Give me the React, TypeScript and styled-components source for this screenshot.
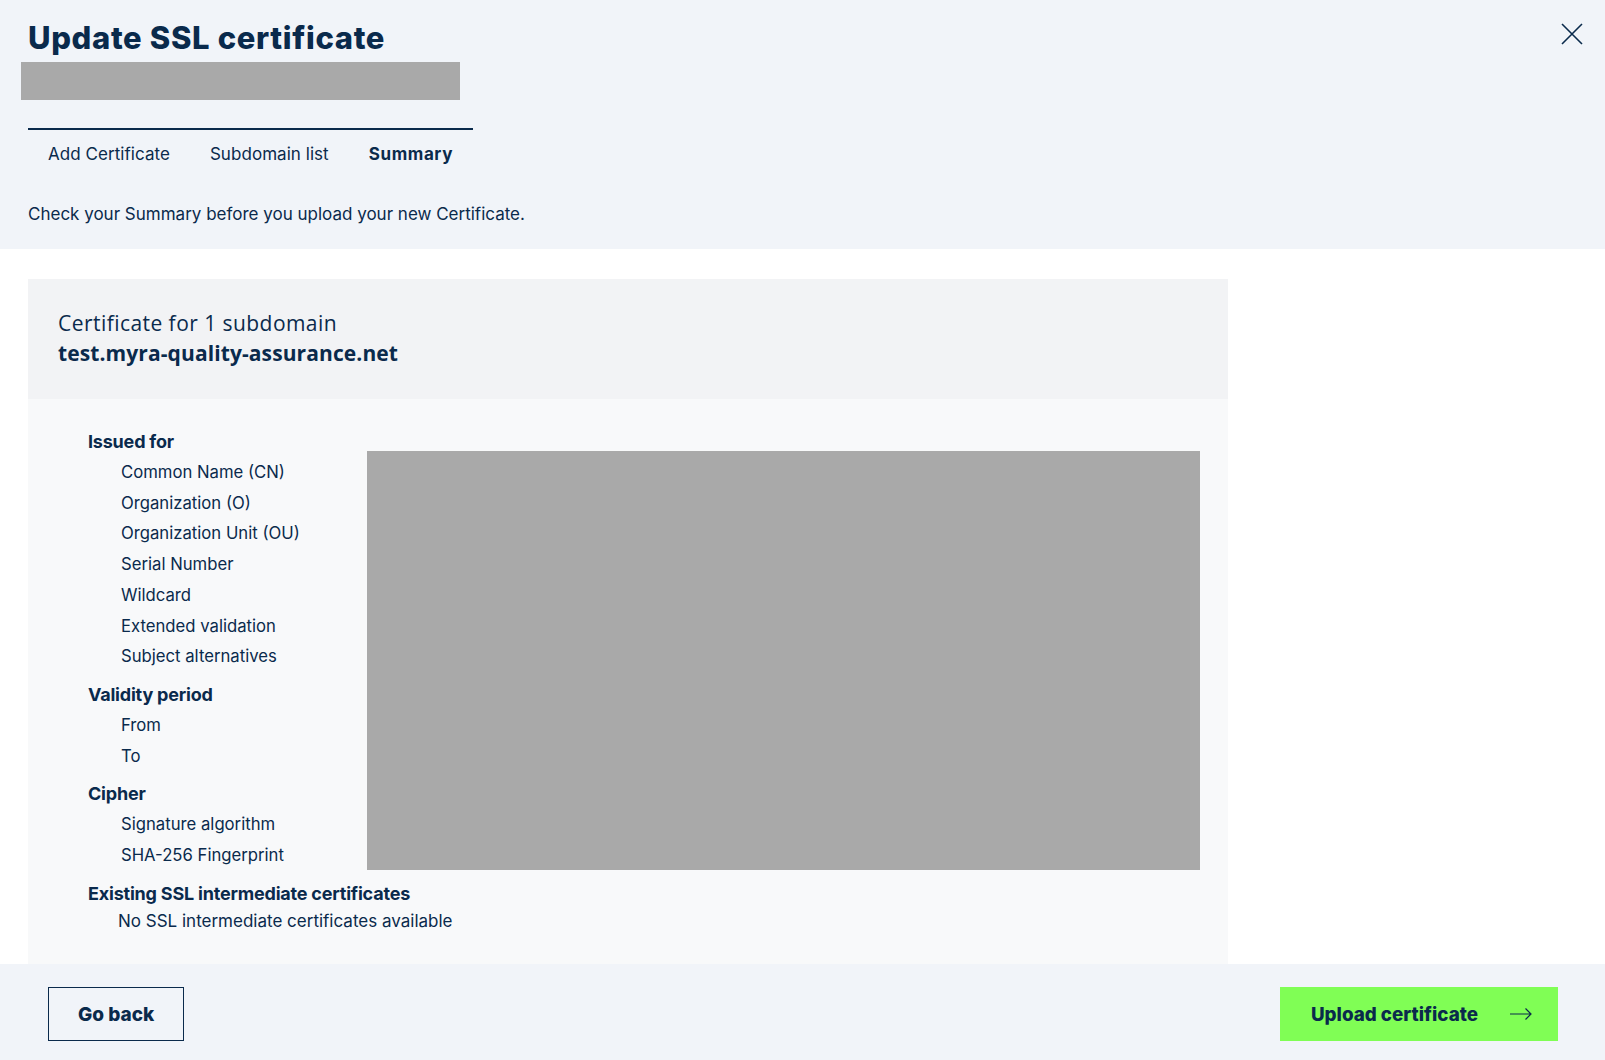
import React from "react";
import styled, { createGlobalStyle } from "styled-components";

const navy = "#0a2a4c";

const GlobalStyle = createGlobalStyle`
  html, body {
    margin: 0;
    padding: 0;
    background: #ffffff;
    color: ${navy};
    font-family: "Inter", "Open Sans", sans-serif;
  }
  * {
    box-sizing: border-box;
  }
`;

//layout
const Page = styled.div`
  width: 1605px;
  height: 1060px;
  display: flex;
  flex-direction: column;
  overflow: hidden;
`;

const Header = styled.header`
  position: relative;
  flex-shrink: 0;
  height: 249px;
  background-color: #f1f4f9;
  padding: 18px 28px 0 28px;
`;

const Title = styled.h1`
  margin: 0;
  font-family: "Inter", sans-serif;
  font-size: 31px;
  font-weight: 800;
  letter-spacing: 0.65px;
  line-height: 40px;
  color: ${navy};
`;

const Redacted = styled.div<{ $w?: number; $h?: number }>`
  background-color: #a9a9a9;
  width: ${(p) => (p.$w ? `${p.$w}px` : "auto")};
  height: ${(p) => (p.$h ? `${p.$h}px` : "auto")};
`;

const HeaderRedacted = styled(Redacted)`
  margin: 4px 0 0 -7px;
`;

const CloseButton = styled.button`
  position: absolute;
  top: 22px;
  right: 21px;
  width: 24px;
  height: 24px;
  padding: 0;
  border: none;
  background: none;
  cursor: pointer;
`;

const Tabs = styled.nav`
  display: inline-flex;
  margin-top: 28px;
  border-top: 2px solid ${navy};
`;

const Tab = styled.span<{ $active?: boolean }>`
  padding: 12px 20px 0 20px;
  font-size: 17px;
  line-height: 24px;
  font-weight: ${(p) => (p.$active ? 700 : 400)};
  letter-spacing: ${(p) => (p.$active ? "0.6px" : "0.05px")};
`;

const Intro = styled.p`
  margin: 37px 0 0 0;
  font-size: 17px;
  line-height: 22px;
`;

const Main = styled.main`
  flex: 1;
  min-height: 0;
  padding: 30px 377px 0 28px;
  display: flex;
  flex-direction: column;
`;

const Card = styled.section`
  flex: 1;
  display: flex;
  flex-direction: column;
`;

const CardHead = styled.div`
  flex-shrink: 0;
  height: 120px;
  background-color: #f2f3f5;
  padding: 29px 30px 0 30px;
  font-family: "Open Sans", sans-serif;
`;

const CardSub = styled.div`
  font-size: 21px;
  line-height: 30px;
  font-weight: 500;
  letter-spacing: 0.45px;
`;

const CardDomain = styled.div`
  font-size: 21px;
  line-height: 30px;
  font-weight: 700;
  letter-spacing: 0.1px;
`;

const CardBody = styled.div`
  flex: 1;
  background-color: #f8f9fa;
  padding: 28px 28px 0 60px;
  display: grid;
  grid-template-columns: 279px 1fr;
  align-items: start;
`;

const Labels = styled.div`
  display: flex;
  flex-direction: column;
`;

const Section = styled.div`
  display: flex;
  flex-direction: column;
  margin-bottom: 8px;
`;

const SectionTitle = styled.div`
  font-size: 18px;
  line-height: 30px;
  font-weight: 700;
  letter-spacing: -0.2px;
  white-space: nowrap;
`;

const Item = styled.div`
  padding-left: 33px;
  font-size: 16.7px;
  line-height: 30.7px;
`;

const Note = styled.div`
  padding-left: 30px;
  font-size: 17px;
  line-height: 24px;
  white-space: nowrap;
`;

const ValueBlock = styled(Redacted)`
  margin-top: 24px;
  height: 419px;
`;

const Footer = styled.footer`
  flex-shrink: 0;
  height: 96px;
  background-color: #f1f4f9;
  padding: 23px 47px 0 48px;
  display: flex;
  justify-content: space-between;
  align-items: flex-start;
`;

const Button = styled.button<{ $primary?: boolean }>`
  height: 54px;
  padding: ${(p) => (p.$primary ? "0 26px 0 31px" : "0 29px")};
  display: inline-flex;
  align-items: center;
  gap: 32px;
  font-family: "Inter", sans-serif;
  font-size: ${(p) => (p.$primary ? "18.8px" : "19px")};
  font-weight: 800;
  color: ${navy};
  background-color: ${(p) => (p.$primary ? "#80fe55" : "transparent")};
  border: ${(p) => (p.$primary ? "none" : `1.5px solid ${navy}`)};
  cursor: pointer;
`;

const issuedFor = [
  "Common Name (CN)",
  "Organization (O)",
  "Organization Unit (OU)",
  "Serial Number",
  "Wildcard",
  "Extended validation",
  "Subject alternatives",
];

const App: React.FC = () => {
  return (
    <Page>
      <GlobalStyle />
      <Header>
        <Title>Update SSL certificate</Title>
        <HeaderRedacted $w={439} $h={38} />
        <CloseButton aria-label="Close">
          <svg width="24" height="24" viewBox="0 0 24 24">
            <path d="M2 2 L22 22 M22 2 L2 22" stroke={navy} strokeWidth="1.6" fill="none" />
          </svg>
        </CloseButton>
        <div>
          <Tabs>
            <Tab>Add Certificate</Tab>
            <Tab>Subdomain list</Tab>
            <Tab $active>Summary</Tab>
          </Tabs>
        </div>
        <Intro>Check your Summary before you upload your new Certificate.</Intro>
      </Header>

      <Main>
        <Card>
          <CardHead>
            <CardSub>Certificate for 1 subdomain</CardSub>
            <CardDomain>test.myra-quality-assurance.net</CardDomain>
          </CardHead>
          <CardBody>
            <Labels>
              <Section>
                <SectionTitle>Issued for</SectionTitle>
                {issuedFor.map((label) => (
                  <Item key={label}>{label}</Item>
                ))}
              </Section>
              <Section>
                <SectionTitle>Validity period</SectionTitle>
                <Item>From</Item>
                <Item>To</Item>
              </Section>
              <Section>
                <SectionTitle>Cipher</SectionTitle>
                <Item>Signature algorithm</Item>
                <Item>SHA-256 Fingerprint</Item>
              </Section>
              <Section>
                <SectionTitle>Existing SSL intermediate certificates</SectionTitle>
                <Note>No SSL intermediate certificates available</Note>
              </Section>
            </Labels>
            <ValueBlock />
          </CardBody>
        </Card>
      </Main>

      <Footer>
        <Button>Go back</Button>
        <Button $primary>
          Upload certificate
          <svg width="22" height="12" viewBox="0 0 22 12">
            <path d="M0 6 H21 M15.5 0.5 L21 6 L15.5 11.5" stroke={navy} strokeWidth="1.2" fill="none" />
          </svg>
        </Button>
      </Footer>
    </Page>
  );
};

export default App;
